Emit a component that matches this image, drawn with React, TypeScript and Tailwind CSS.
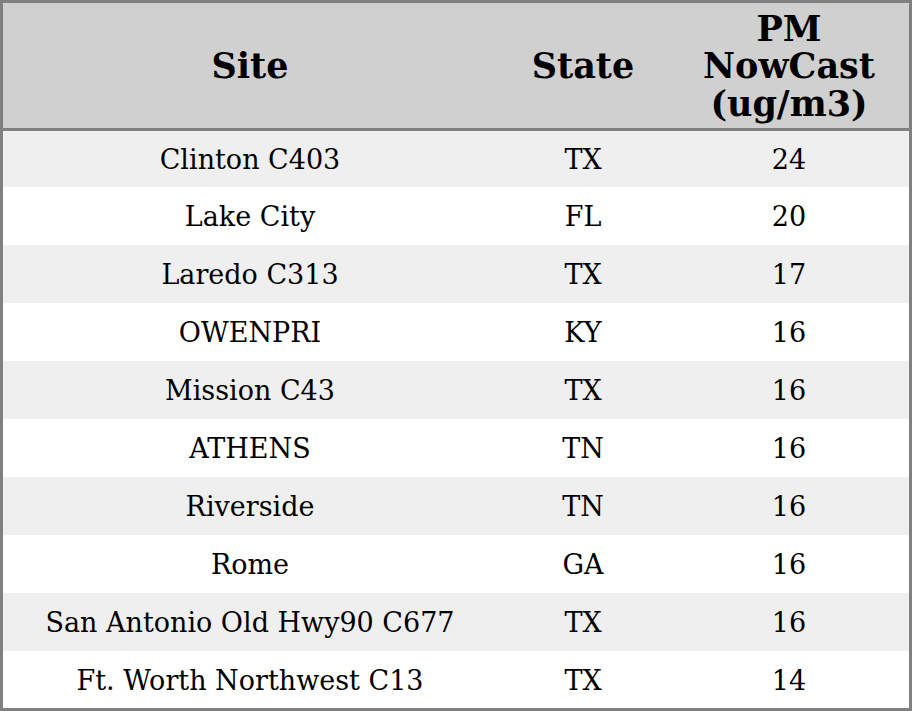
import React from "react";

const rows: [string, string, string][] = [
  ["Clinton C403", "TX", "24"],
  ["Lake City", "FL", "20"],
  ["Laredo C313", "TX", "17"],
  ["OWENPRI", "KY", "16"],
  ["Mission C43", "TX", "16"],
  ["ATHENS", "TN", "16"],
  ["Riverside", "TN", "16"],
  ["Rome", "GA", "16"],
  ["San Antonio Old Hwy90 C677", "TX", "16"],
  ["Ft. Worth Northwest C13", "TX", "14"],
];

export default function App() {
  return (
    <div
      className="w-[912px] h-[711px] bg-white text-black border-[3px] border-[#808080] flex flex-col"
      style={{ fontFamily: '"DejaVu Serif", "Liberation Serif", serif' }}
    >
      <div className="grid grid-cols-[494px_172px_240px] h-[128px] shrink-0 bg-[#d0d0d0] border-b-[3px] border-[#808080] text-[35px] font-bold leading-[37.5px]">
        <div className="flex items-center justify-center text-center pt-[1px]">Site</div>
        <div className="flex items-center justify-center text-center pt-[1px]">State</div>
        <div className="flex items-center justify-center text-center pt-[1px]">
          PM
          <br />
          NowCast
          <br />
          (ug/m3)
        </div>
      </div>
      <div className="flex flex-col flex-1">
        {rows.map((r, i) => (
          <div
            key={i}
            className={
              "grid grid-cols-[494px_172px_240px] text-[27px] " +
              (i === 0 ? "h-[56px] " : i === rows.length - 1 ? "flex-1 " : "h-[58px] ") +
              (i % 2 === 0 ? "bg-[#efefef]" : "bg-white")
            }
          >
            <div className="flex items-center justify-center pt-[3px]">{r[0]}</div>
            <div className="flex items-center justify-center pt-[3px]">{r[1]}</div>
            <div className="flex items-center justify-center pt-[3px]">{r[2]}</div>
          </div>
        ))}
      </div>
    </div>
  );
}
